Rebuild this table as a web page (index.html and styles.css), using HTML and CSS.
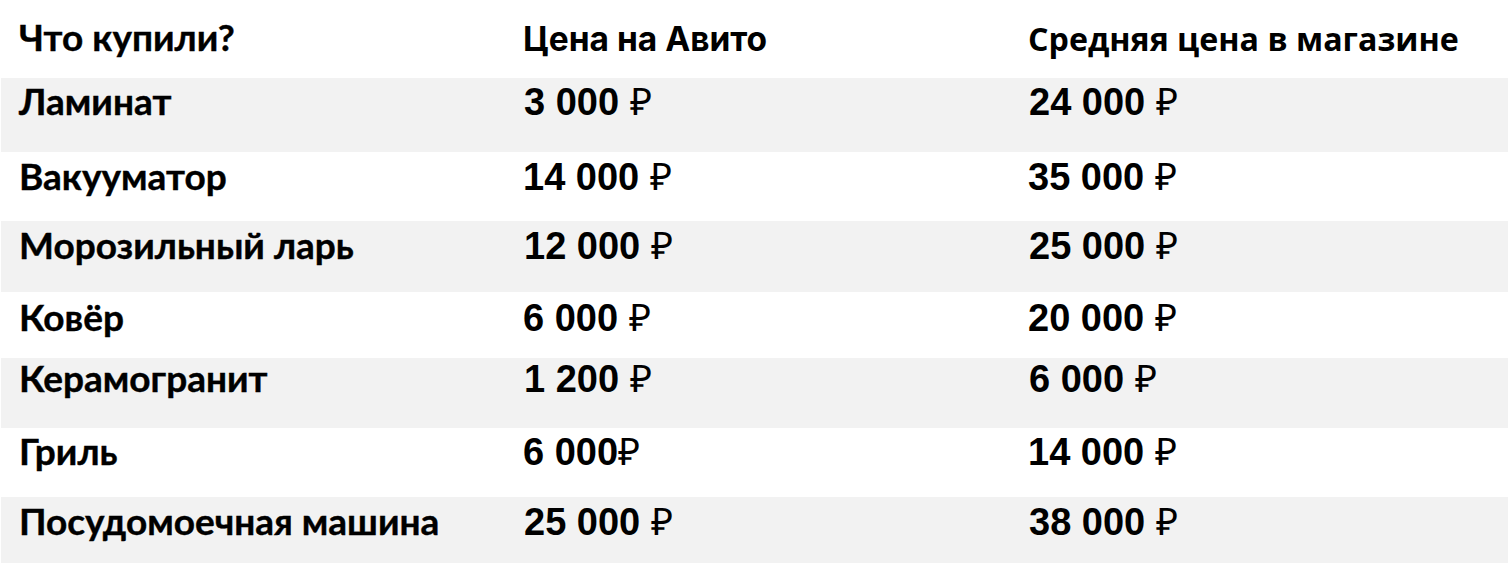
FILE: index.html
```html
<!DOCTYPE html>
<html lang="ru">
<head>
<meta charset="utf-8">
<link rel="stylesheet" href="styles.css">
</head>
<body>
<div class="table">
  <div class="row head r0">
    <div class="cell name">Что купили?</div>
    <div class="cell h-avito">Цена на Авито</div>
    <div class="cell h-shop">Средняя цена в магазине</div>
  </div>
  <div class="row gray r1">
    <div class="cell name">Ламинат</div>
    <div class="cell price">3 000 <span class="rub">₽</span></div>
    <div class="cell price">24 000 <span class="rub">₽</span></div>
  </div>
  <div class="row r2">
    <div class="cell name">Вакууматор</div>
    <div class="cell price">14 000 <span class="rub">₽</span></div>
    <div class="cell price">35 000 <span class="rub">₽</span></div>
  </div>
  <div class="row gray r3">
    <div class="cell name">Морозильный ларь</div>
    <div class="cell price">12 000 <span class="rub">₽</span></div>
    <div class="cell price">25 000 <span class="rub">₽</span></div>
  </div>
  <div class="row r4">
    <div class="cell name">Ковёр</div>
    <div class="cell price">6 000 <span class="rub">₽</span></div>
    <div class="cell price">20 000 <span class="rub">₽</span></div>
  </div>
  <div class="row gray r5">
    <div class="cell name">Керамогранит</div>
    <div class="cell price">1 200 <span class="rub">₽</span></div>
    <div class="cell price">6 000 <span class="rub">₽</span></div>
  </div>
  <div class="row r6">
    <div class="cell name">Гриль</div>
    <div class="cell price">6 000<span class="rub">₽</span></div>
    <div class="cell price">14 000 <span class="rub">₽</span></div>
  </div>
  <div class="row gray r7">
    <div class="cell name">Посудомоечная машина</div>
    <div class="cell price">25 000 <span class="rub">₽</span></div>
    <div class="cell price">38 000 <span class="rub">₽</span></div>
  </div>
</div>
</body>
</html>
```

FILE: styles.css
```css
html, body {
  margin: 0;
  padding: 0;
  background: #ffffff;
}
body {
  width: 1508px;
  height: 563px;
  overflow: hidden;
  color: #000;
}
.table {
  display: flex;
  flex-direction: column;
}
.row {
  display: grid;
  grid-template-columns: 504px 505px 1fr;
  align-items: baseline;
  box-sizing: border-box;
  padding-top: 4px;
}
.row.gray {
  background: #f2f2f2;
  margin-left: 1px;
}
.row.gray .cell:first-child {
  padding-left: 18px;
}
.cell {
  padding-left: 19px;
  line-height: 1;
  white-space: nowrap;
}
.name {
  font-family: Lato, "Open Sans", sans-serif;
  font-weight: 700;
  font-size: 37px;
  -webkit-text-stroke: 0.4px #000;
}
.head .name {
  padding-top: 14px;
}
.h-avito {
  font-family: Inter, "Noto Sans", sans-serif;
  font-weight: 700;
  font-size: 33.5px;
}
.h-shop {
  font-family: "Open Sans", "Noto Sans", sans-serif;
  font-weight: 700;
  font-size: 32.2px;
}
.price {
  font-family: "Liberation Sans", Arial, sans-serif;
  font-weight: 700;
  font-size: 38px;
}
.rub {
  font-weight: 400;
}
.r0 { height: 78px; }
.r1 { height: 74px; }
.r2 { height: 69px; }
.r3 { height: 71px; }
.r4 { height: 66px; }
.r5 { height: 70px; }
.r6 { height: 69px; }
.r7 { height: 66px; padding-top: 5px; }
.r2, .r3 { padding-top: 5px; }
.r4 { padding-top: 6px; }
.r5 { padding-top: 1px; }
```
